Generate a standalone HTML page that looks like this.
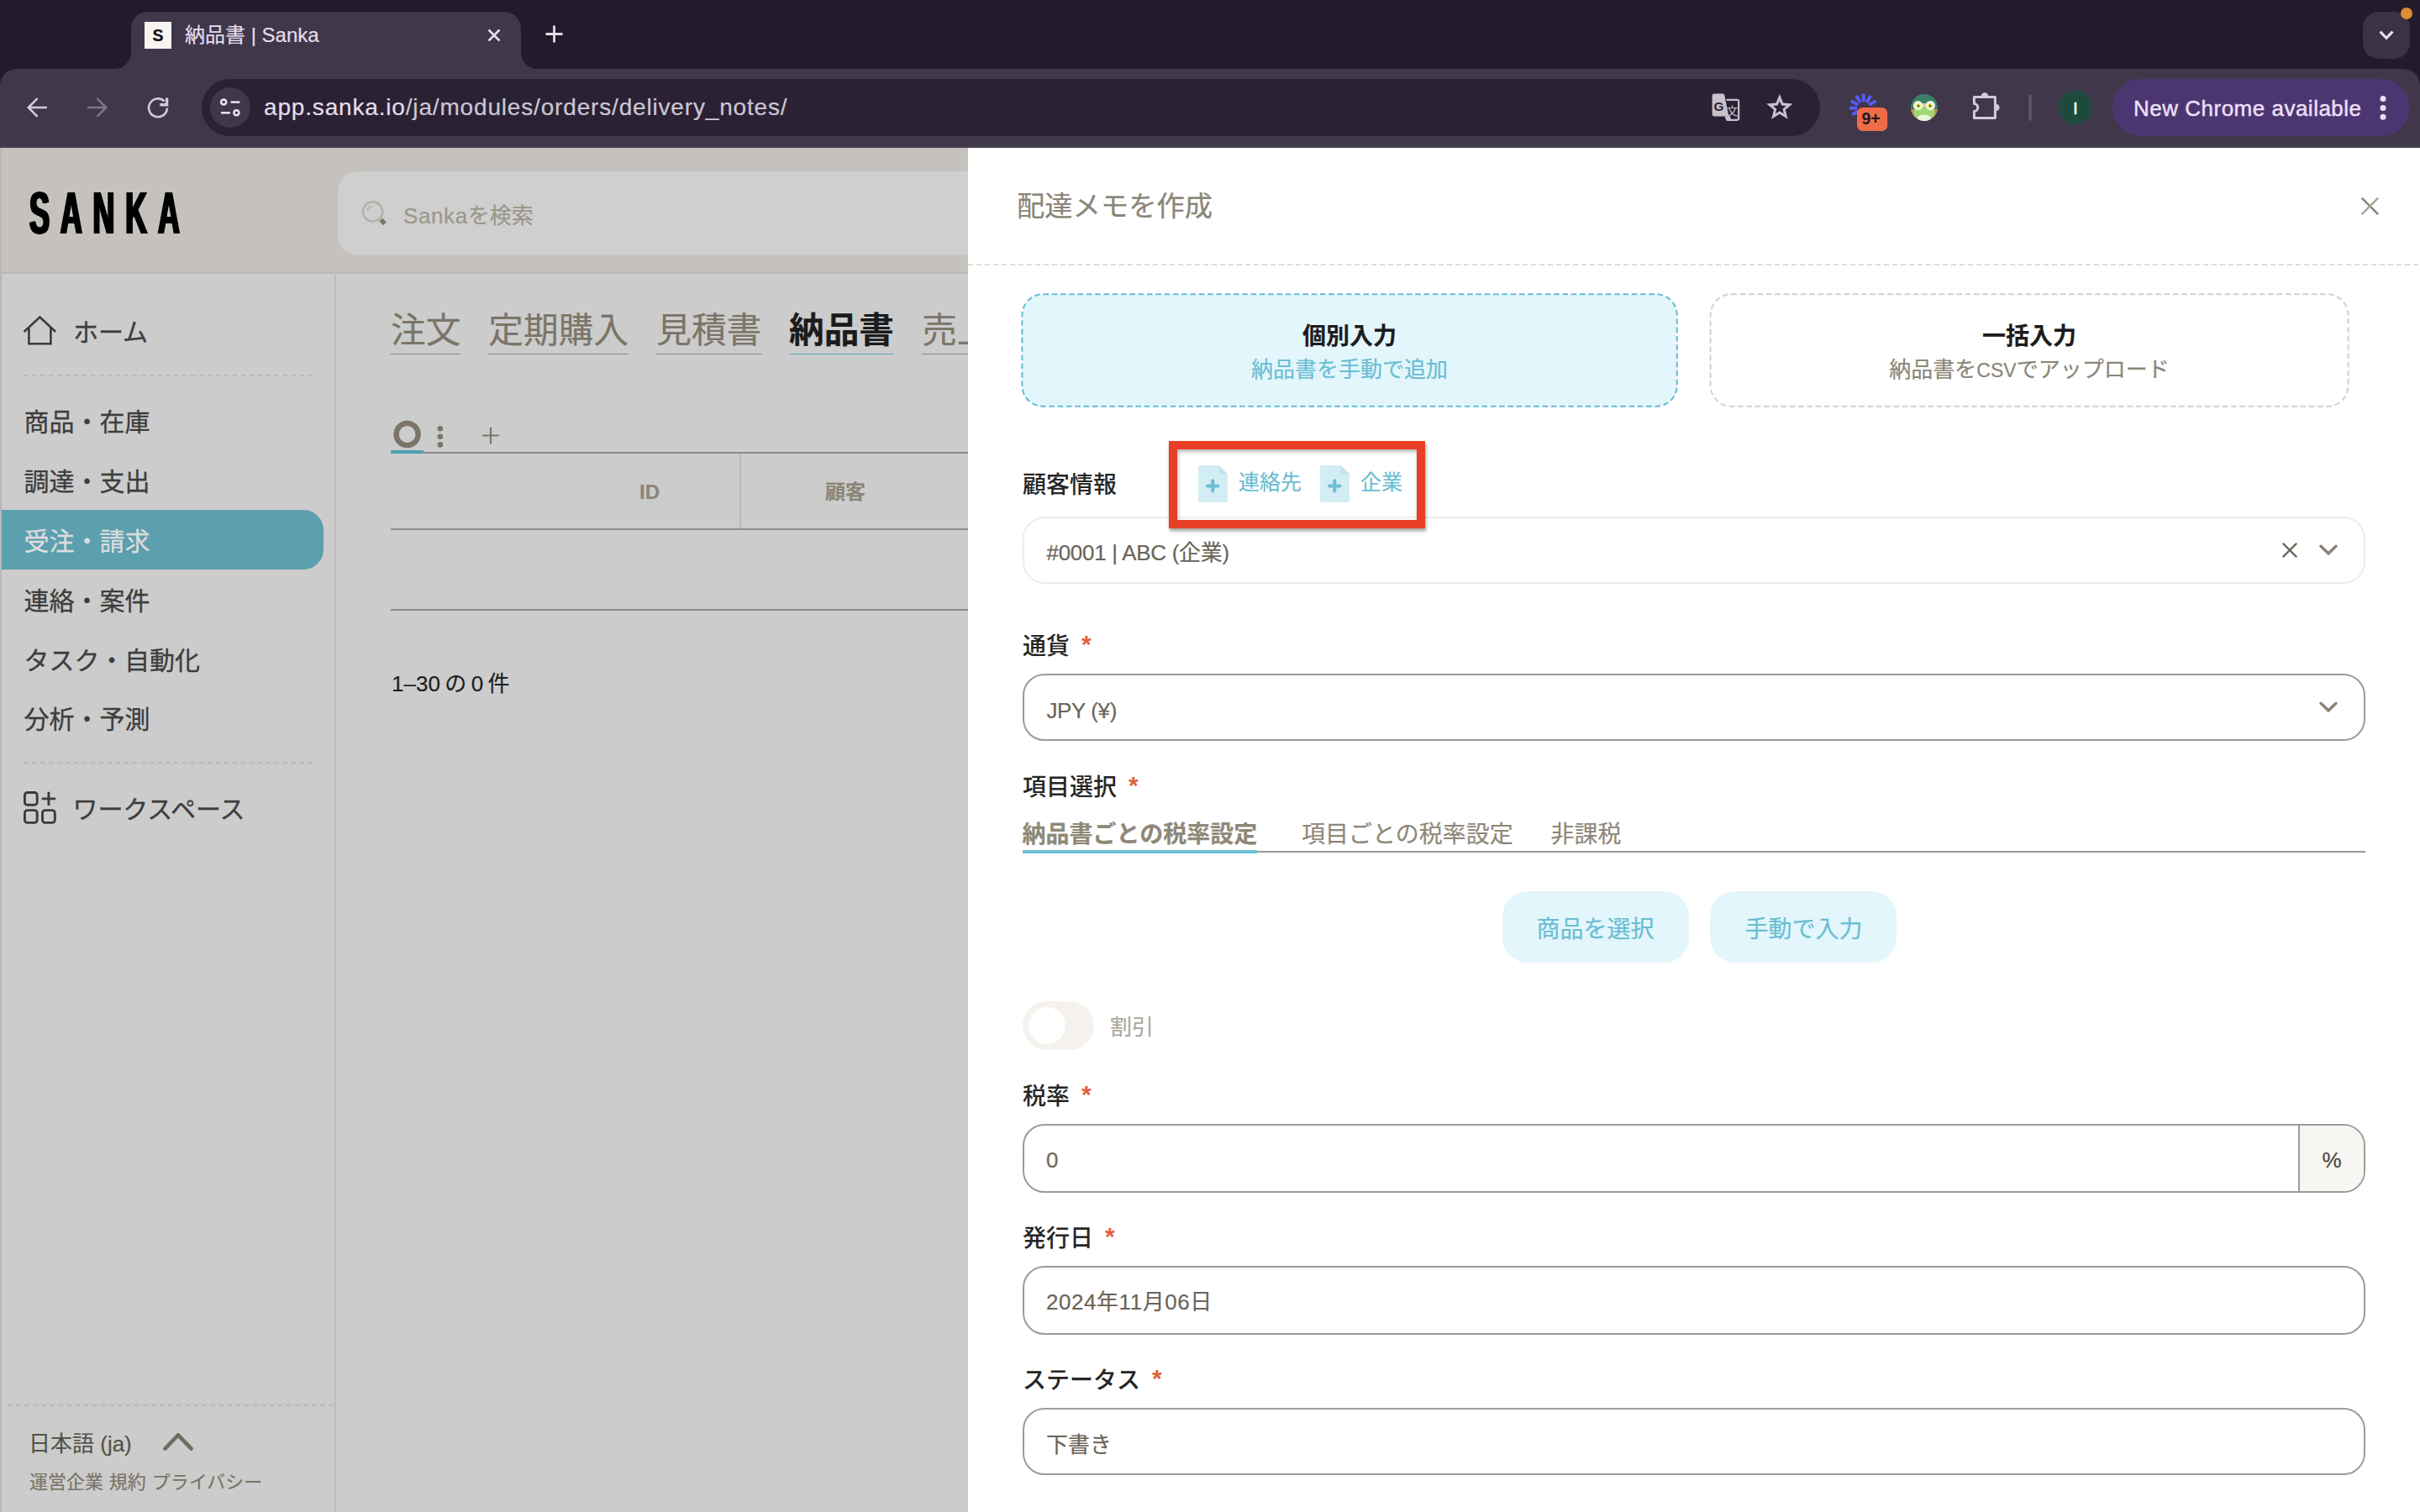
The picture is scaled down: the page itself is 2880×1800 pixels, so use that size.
<!DOCTYPE html>
<html lang="ja">
<head>
<meta charset="utf-8">
<title>納品書 | Sanka</title>
<style>
*{box-sizing:border-box;margin:0;padding:0}
html,body{width:2880px;height:1800px;overflow:hidden;background:#cccccc}
body{position:relative;font-family:"Liberation Sans","Noto Sans CJK JP",sans-serif;color:#2a2a2a}
.abs{position:absolute}
.t{position:absolute;white-space:nowrap;line-height:1;-webkit-text-stroke:0.2px}
svg{position:absolute;overflow:visible}
/* ---------- browser chrome ---------- */
#tabstrip{left:0;top:0;width:2880px;height:120px;background:#231b2b}
#toolbar{left:0;top:82px;width:2880px;height:94px;background:#40374a;border-radius:20px 20px 0 0}
#chromeline{left:0;top:174px;width:2880px;height:2px;background:linear-gradient(#4a4650 0 50%,#3e3a44 50% 100%)}
#tab{left:156px;top:14px;width:464px;height:70px;background:#40374a;border-radius:20px 20px 0 0}
.flare{width:20px;height:20px;top:62px;background:#40374a}
.flare i{position:absolute;left:0;top:0;width:20px;height:20px;background:#231b2b}
#omni{left:240px;top:94px;width:1926px;height:68px;border-radius:34px;background:#2a2234}
#siteinfo{left:250px;top:104px;width:48px;height:48px;border-radius:24px;background:#40374a}
.ctext{color:#e4deea}
/* ---------- app (dimmed) ---------- */
#apphead{left:0;top:176px;width:1152px;height:150px;background:#c5c2bd;border-bottom:2px solid #b9b8b5;border-top:1.5px solid #bfbfbe}
#leftedge{left:0;top:176px;width:2px;height:1624px;background:#b7b7b7}
#sideborder{left:398px;top:325px;width:2px;height:1475px;background:#bdbdbd}
#search{left:402px;top:204px;width:900px;height:100px;border-radius:24px;background:#cfcfcf}
.nav{font-size:30px;color:#3d3d3d;-webkit-text-stroke:0.3px}
.dash{height:0;border-top:2px dashed #b9b9b9}
#active{left:2px;top:607px;width:383px;height:71px;background:#5c9fae;border-radius:0 24px 24px 0}
.mtab{font-size:41.7px;color:#7b7568;height:55.6px;border-bottom:1.6px solid #8a877f}
/* ---------- drawer ---------- */
#drawer{left:1152px;top:176px;width:1728px;height:1624px;background:#fff}
.lbl{font-size:28px;color:#262626;font-weight:500;-webkit-text-stroke:0}
.req{color:#e0603f;font-weight:700;font-size:30px;line-height:0;position:relative;top:-1.8px;left:0px}
.inp{border:2px solid #9b9b9b;border-radius:26px;background:#fff}
.val{font-size:26px;color:#6b6459}
</style>
</head>
<body>
<!-- ======= BROWSER CHROME ======= -->
<div id="tabstrip" class="abs"></div>
<div id="toolbar" class="abs"></div>
<div id="tab" class="abs"></div>
<div class="abs flare" style="left:136px"><i style="border-radius:0 0 20px 0"></i></div>
<div class="abs flare" style="left:620px"><i style="border-radius:0 0 0 20px"></i></div>
<div id="chromeline" class="abs"></div>
<!-- favicon -->
<div class="abs" style="left:172px;top:26px;width:32px;height:32px;background:#f8f4f2"></div>
<div class="t" style="left:172px;top:26px;width:32px;height:32px;line-height:33px;text-align:center;font-size:19.5px;font-weight:700;color:#111">S</div>
<div class="t ctext" id="tabtitle" style="left:220px;top:27px;font-size:24px;line-height:30px">納品書 | Sanka</div>
<!-- tab close -->
<svg style="left:580px;top:34px" width="16" height="16" viewBox="0 0 16 16"><path d="M1.5 1.5L14.5 14.5M14.5 1.5L1.5 14.5" stroke="#e4deea" stroke-width="2.6" fill="none"/></svg>
<!-- new tab plus -->
<svg style="left:649px;top:30px" width="21" height="21" viewBox="0 0 21 21"><path d="M10.5 0.5V20.5M0.5 10.5H20.5" stroke="#e4deea" stroke-width="2.8" fill="none"/></svg>
<!-- tab search button -->
<div class="abs" style="left:2812px;top:14px;width:56px;height:56px;border-radius:19px;background:#3b3245"></div>
<svg style="left:2831px;top:36px" width="18" height="12" viewBox="0 0 18 12"><path d="M1.6 1.6L9 9.4L16.4 1.6" stroke="#e9e2ef" stroke-width="3" fill="none"/></svg>
<div class="abs" style="left:2857px;top:9px;width:14px;height:14px;border-radius:7px;background:#dc8e31"></div>
<!-- back -->
<svg style="left:32px;top:116px" width="24" height="24" viewBox="0 0 24 24"><path d="M24 12H3M12.6 1.2L1.8 12L12.6 22.8" stroke="#d3c8e0" stroke-width="2.6" fill="none" stroke-linejoin="miter"/></svg>
<!-- forward -->
<svg style="left:104px;top:116px" width="24" height="24" viewBox="0 0 24 24"><path d="M0 12H21M11.4 1.2L22.2 12L11.4 22.8" stroke="#7f7589" stroke-width="2.6" fill="none"/></svg>
<!-- reload -->
<svg style="left:175px;top:115px" width="26" height="26" viewBox="0 0 26 26"><path d="M23.9 13.6A10.9 10.9 0 1 1 20.6 5.5" stroke="#d3c8e0" stroke-width="2.6" fill="none"/><path d="M25.3 1.4V11.4H15.3V8H21.9V1.4Z" fill="#d3c8e0"/></svg>
<!-- omnibox -->
<div id="omni" class="abs"></div>
<div id="siteinfo" class="abs"></div>
<svg style="left:262px;top:116px" width="24" height="24" viewBox="0 0 24 24" fill="none" stroke="#ece4f2" stroke-width="2.5"><circle cx="4.2" cy="5.6" r="3"/><path d="M12.6 5.6H23.3"/><circle cx="19.4" cy="18.3" r="3"/><path d="M1 18.3H12"/></svg>
<div class="t ctext" id="url" style="left:314px;top:111px;font-size:28px;line-height:34px;letter-spacing:0.83px">app.sanka.io<span style="color:#cdc6d4">/ja/modules/orders/delivery_notes/</span></div>
<!-- translate icon -->
<svg style="left:2037px;top:111px" width="34" height="34" viewBox="0 0 34 34"><path d="M17.6 7.8H30a2.2 2.2 0 0 1 2.2 2.2V29.6a2.2 2.2 0 0 1-2.2 2.2H22.4L20.4 27" fill="none" stroke="#c6c1cb" stroke-width="2.2"/><path d="M3 .6H13.4Q15 .6 15.3 2.2L20.4 27.4H3Q.6 27.4 .6 25V3Q.6 .6 3 .6Z" fill="#c6c1cb"/><path d="M15.6 27.4H20.6L22.8 33H19.2Q17.4 33 17 31.4Z" fill="#c6c1cb"/><text x="8.6" y="20.6" font-family="Liberation Sans,sans-serif" font-size="15.5" font-weight="700" fill="#2a2234" text-anchor="middle">G</text><text x="24.6" y="26" font-family="Liberation Sans,Noto Sans CJK JP,sans-serif" font-size="14" fill="#c6c1cb" text-anchor="middle">文</text></svg>
<!-- star -->
<svg style="left:2102px;top:111px" width="32" height="32" viewBox="0 0 32 32"><path fill-rule="evenodd" fill="#c6c1cb" d="M15.90 1.00L20.16 11.61L31.56 12.38L22.79 19.71L25.58 30.79L15.90 24.72L6.22 30.79L9.01 19.71L0.24 12.38L11.64 11.61ZM15.90 9.17L18.14 14.38L23.79 14.91L19.53 18.65L20.78 24.18L15.90 21.29L11.02 24.18L12.27 18.65L8.01 14.91L13.66 14.38Z"/></svg>
<!-- extension 1: burst + badge -->
<svg style="left:2196px;top:108px" width="56" height="52" viewBox="0 0 56 52"><g stroke="#5a5af5" stroke-width="3.9" fill="none"><path d="M21.7 13.1L21.7 3.5"/><path d="M25.5 14.1L30.3 5.8"/><path d="M17.9 14.1L13.1 5.8"/><path d="M28.3 16.9L36.6 12.1"/><path d="M15.1 16.9L6.8 12.1"/><path d="M14.1 20.7L4.9 20.7"/><path d="M15.1 24.5L8.4 28.4"/></g><rect x="14" y="20" width="36.2" height="28" rx="6.5" fill="#ee6c47"/><text x="30.6" y="40.1" font-family="Liberation Sans,sans-serif" font-size="19.5" font-weight="700" fill="#1d1820" text-anchor="middle">9+</text></svg>
<!-- extension 2: frog -->
<svg style="left:2274px;top:112px" width="32" height="32" viewBox="0 0 32 32"><defs><clipPath id="fc"><circle cx="16" cy="16" r="16"/></clipPath></defs><g clip-path="url(#fc)"><rect width="32" height="32" fill="#3a8069"/><rect y="18" width="32" height="14" fill="#c98a5a"/><ellipse cx="16" cy="21.5" rx="12.4" ry="9.6" fill="#9ed872"/><ellipse cx="16" cy="28.5" rx="8" ry="4" fill="#e9f6d6"/><rect x="12.6" y="11" width="6.8" height="4" fill="#e8c6a4"/><circle cx="8.6" cy="13.6" r="5.6" fill="#f2f3ea"/><circle cx="23.4" cy="13.6" r="5.6" fill="#f2f3ea"/><circle cx="9" cy="14" r="2.7" fill="#d8e63a"/><circle cx="23" cy="14" r="2.7" fill="#d8e63a"/><circle cx="9" cy="14" r="1.2" fill="#3a4a20"/><circle cx="23" cy="14" r="1.2" fill="#3a4a20"/></g></svg>
<!-- puzzle -->
<svg style="left:2346px;top:108px" width="36" height="36" viewBox="0 0 36 36"><path d="M3.4 7.4H28.4V32.6H3.4V24.4A4.4 4.4 0 0 0 3.4 15.6Z" fill="none" stroke="#d5c9e3" stroke-width="3" stroke-linejoin="round"/><path d="M11.8 6.4A4.2 4.2 0 0 1 20.2 6.4Z" fill="#d5c9e3"/><path d="M29.4 15.8A4.2 4.2 0 0 1 29.4 24.2Z" fill="#d5c9e3"/></svg>
<!-- separator -->
<div class="abs" style="left:2414px;top:112px;width:4px;height:32px;border-radius:2px;background:#5c5269"></div>
<!-- avatar -->
<div class="abs" style="left:2450px;top:108px;width:40px;height:40px;border-radius:20px;background:#1c4b3d"></div>
<div class="t" style="left:2450px;top:108px;width:40px;height:40px;line-height:41px;text-align:center;font-size:21px;color:#fff;-webkit-text-stroke:0.4px #fff">I</div>
<!-- update pill -->
<div class="abs" style="left:2514px;top:94px;width:354px;height:68px;border-radius:34px;background:#4c3672"></div>
<div class="t" id="pilltxt" style="left:2539px;top:112px;font-size:26px;line-height:34px;letter-spacing:0.5px;color:#ecdff5;-webkit-text-stroke:0.5px #ecdff5">New Chrome available</div>
<svg style="left:2832px;top:113px" width="8" height="30" viewBox="0 0 8 30" fill="#ecdff5"><circle cx="4" cy="4.4" r="3.5"/><circle cx="4" cy="15.4" r="3.5"/><circle cx="4" cy="26.2" r="3.5"/></svg>
<!-- ======= APP ======= -->
<div id="apphead" class="abs"></div>
<div id="leftedge" class="abs"></div>
<div id="sideborder" class="abs"></div>
<!-- APPSTART -->
<div id="search" class="abs"></div>
<!-- logo -->
<div class="t" id="logo" style="left:34.6px;top:219.6px;font-size:69.5px;line-height:69.5px;font-weight:700;color:#000;letter-spacing:24.3px;transform:scaleX(0.52);transform-origin:0 0;text-shadow:-2.2px 0 0 #000,2.2px 0 0 #000,-1.1px 0 0 #000,1.1px 0 0 #000">SANKA</div>
<!-- search icon -->
<svg style="left:428px;top:236px" width="36" height="36" viewBox="0 0 36 36"><circle cx="15.6" cy="16" r="11.6" fill="none" stroke="#b5b2aa" stroke-width="2.6"/><path d="M9.4 14.4A6.4 6.4 0 0 1 14.4 9.6" fill="none" stroke="#b5b2aa" stroke-width="2"/><path d="M25.2 25.6L30 30.4" stroke="#7b7463" stroke-width="5.4" fill="none"/></svg>
<div class="t" id="ph" style="left:480px;top:239px;font-size:26px;line-height:36px;color:#9a968a"><span style="letter-spacing:0.6px">Sanka</span>を検索</div>
<!-- sidebar -->
<svg style="left:27px;top:375px" width="42" height="37" viewBox="0 0 42 37"><path d="M1.6 20L20.4 2.6L39.2 20" fill="none" stroke="#3b3b3b" stroke-width="2.6" stroke-linejoin="miter"/><path d="M7.4 15.6V34.2H33.4V15.6" fill="none" stroke="#3b3b3b" stroke-width="2.6"/></svg>
<div class="t nav" id="n0" style="left:87px;top:378px;line-height:36px">ホーム</div>
<div class="abs dash" style="left:28px;top:446px;width:344px"></div>
<div class="t nav" id="n1" style="left:28.5px;top:485px;line-height:36px">商品・在庫</div>
<div class="t nav" id="n2" style="left:28.5px;top:556px;line-height:36px">調達・支出</div>
<div id="active" class="abs"></div>
<div class="t nav" id="n3" style="left:28.5px;top:627px;line-height:36px;color:#dcdcdc">受注・請求</div>
<div class="t nav" id="n4" style="left:28.5px;top:698px;line-height:36px">連絡・案件</div>
<div class="t nav" id="n5" style="left:28.5px;top:769px;line-height:36px">タスク・自動化</div>
<div class="t nav" id="n6" style="left:28.5px;top:839px;line-height:36px">分析・予測</div>
<div class="abs dash" style="left:28px;top:907px;width:344px"></div>
<svg style="left:28px;top:941px" width="41" height="41" viewBox="0 0 40 40" fill="none" stroke="#3b3b3b" stroke-width="2.8"><rect x="1.4" y="2.4" width="14.4" height="14.4" rx="3"/><rect x="1.4" y="23" width="14.4" height="14.4" rx="3"/><rect x="22" y="23" width="14.4" height="14.4" rx="3"/><path d="M29.2 1.6V17.6M21.2 9.6H37.2"/></svg>
<div class="t nav" id="n7" style="left:86.5px;top:945.5px;line-height:36px;letter-spacing:-0.1px">ワークスペース</div>
<div class="abs dash" style="left:9px;top:1672px;width:388px"></div>
<div class="t" id="lang" style="left:34px;top:1701px;font-size:26px;line-height:36px;color:#55524b">日本語 (ja)</div>
<svg style="left:194px;top:1704px" width="36" height="24" viewBox="0 0 36 24"><path d="M2.4 20.6L18 4.4L33.6 20.6" fill="none" stroke="#6f6c60" stroke-width="4.6" stroke-linecap="round" stroke-linejoin="round"/></svg>
<div class="t" id="foot" style="left:35px;top:1750px;font-size:22px;line-height:30px;color:#7a7466;word-spacing:0.7px">運営企業 規約 プライバシー</div>
<!-- main tabs -->
<div class="t mtab" id="mt1" style="left:465px;top:366px;line-height:55px;width:83.4px">注文</div>
<div class="t mtab" id="mt2" style="left:581.3px;top:366px;line-height:55px">定期購入</div>
<div class="t mtab" id="mt3" style="left:781.3px;top:366px;line-height:55px">見積書</div>
<div class="t mtab" id="mt4" style="left:939px;top:366px;line-height:55px;color:#1c1c1c;font-weight:700;border-bottom-color:#5aa5b5">納品書</div>
<div class="t mtab" id="mt5" style="left:1097.2px;top:366px;line-height:55px">売上</div>
<!-- view row -->
<svg style="left:465px;top:498px" width="140" height="44" viewBox="0 0 140 44"><circle cx="19.6" cy="19" r="13.1" fill="none" stroke="#7b7568" stroke-width="6.4"/><g fill="#7b7568"><circle cx="58.9" cy="12.2" r="3.3"/><circle cx="58.9" cy="21.8" r="3.3"/><circle cx="58.9" cy="31.4" r="3.3"/></g><path d="M119 10.7V30.3M109.2 20.5H128.8" stroke="#7b7568" stroke-width="2.2" fill="none"/></svg>
<div class="abs" style="left:465px;top:537.5px;width:700px;height:2px;background:#8c8c8c"></div>
<div class="abs" style="left:465px;top:536px;width:39px;height:4px;background:#4f9fb0"></div>
<div class="abs" style="left:880.4px;top:540px;width:1.6px;height:90px;background:#bcbcbc"></div>
<div class="t" id="thid" style="left:713px;top:568px;width:120px;text-align:center;font-size:24px;line-height:36px;font-weight:700;color:#8a8679">ID</div>
<div class="t" id="thc" style="left:946px;top:568px;width:120px;text-align:center;font-size:24px;line-height:36px;font-weight:700;color:#8a8679">顧客</div>
<div class="abs" style="left:465px;top:629.2px;width:700px;height:2px;background:#8c8c8c"></div>
<div class="abs" style="left:465px;top:725px;width:700px;height:2px;background:#8c8c8c"></div>
<div class="t" id="cnt" style="left:466px;top:796px;font-size:26px;line-height:36px;color:#1e1e1e;word-spacing:-1.8px">1–30 の 0 件</div>
<!-- APPEND -->
<!-- ======= DRAWER ======= -->
<div id="drawer" class="abs"></div>
<!-- DRSTART -->
<div class="t" id="dtitle" style="left:1210px;top:224px;font-size:33.3px;line-height:44px;color:#8a8578">配達メモを作成</div>
<svg style="left:2810px;top:234.8px" width="21" height="21" viewBox="0 0 21 21"><path d="M1.4 1.4L19.4 19.4" stroke="#8a8578" stroke-width="2.6" stroke-linecap="round"/><path d="M19.4 1.4L1.4 19.4" stroke="#aaa698" stroke-width="2.6" stroke-linecap="round"/></svg>
<div class="abs" id="dline" style="left:1152px;top:314px;width:1728px;height:2px;background:repeating-linear-gradient(90deg,#e1dfd6 0 6px,transparent 6px 10px)"></div>
<!-- cards -->
<svg id="card1" style="left:1214px;top:348px" width="784" height="138" viewBox="0 0 784 138"><rect x="2.4" y="2.2" width="779.4" height="133.6" rx="25" fill="#e2f6fc" stroke="#62bdd4" stroke-width="2" stroke-dasharray="6.6 3.7"/></svg>
<svg id="card2" style="left:2033px;top:348px" width="764" height="138" viewBox="0 0 764 138"><rect x="2.6" y="2.2" width="759" height="133.6" rx="25" fill="#fff" stroke="#d6d1c4" stroke-width="2" stroke-dasharray="6.6 3.7"/></svg>
<div class="t" id="c1a" style="left:1215.5px;top:382.5px;width:781px;text-align:center;font-size:28px;line-height:36px;font-weight:700;color:#1c1c1c">個別入力</div>
<div class="t" id="c1b" style="left:1215.5px;top:421.7px;width:781px;text-align:center;font-size:26px;line-height:36px;color:#6bbdd3">納品書を手動で追加</div>
<div class="t" id="c2a" style="left:2034.5px;top:382.5px;width:761px;text-align:center;font-size:28px;line-height:36px;font-weight:700;color:#1c1c1c">一括入力</div>
<div class="t" id="c2b" style="left:2034.5px;top:421.7px;width:761px;text-align:center;font-size:26px;line-height:36px;color:#8a8578">納品書を<span style="font-size:23px">CSV</span>でアップロード</div>
<!-- customer -->
<div class="t lbl" id="l1" style="left:1217px;top:559.5px;line-height:36px">顧客情報</div>
<div class="abs" id="sel1" style="left:1217px;top:615px;width:1598px;height:79.5px;border-radius:26px;border:2px solid #efede7;background:#fff"></div>
<div class="t val" id="v1" style="left:1245.5px;top:640px;line-height:36px;letter-spacing:-0.3px">#0001 | ABC (企業)</div>
<svg style="left:2715px;top:645.4px" width="20" height="20" viewBox="0 0 20 20"><path d="M2.4 2.4L17.6 17.6M17.6 2.4L2.4 17.6" stroke="#6d685c" stroke-width="2.4" stroke-linecap="round" fill="none"/></svg>
<svg class="chev" style="left:2760px;top:648px" width="22" height="14" viewBox="0 0 22 14"><path d="M2 2.2L11 10.8L20 2.2" stroke="#8a8373" stroke-width="3.4" stroke-linecap="round" stroke-linejoin="miter" fill="none"/></svg>
<!-- red annotation -->
<div class="abs" id="redbox" style="left:1391px;top:525px;width:305px;height:104px;border:10px solid #e63f25;box-shadow:1px 3px 4px rgba(0,0,0,.38), inset 1px 3px 4px rgba(0,0,0,.28)"></div>
<svg class="doc" style="left:1425.6px;top:554px" width="35" height="44" viewBox="0 0 35 44"><path d="M2 0H24.5L35 10.5V42a2 2 0 0 1-2 2H2a2 2 0 0 1-2-2V2a2 2 0 0 1 2-2Z" fill="#d3edf4"/><path d="M24.5 0L35 10.5H26.5a2 2 0 0 1-2-2Z" fill="#c2e3ed"/><path d="M17.3 18.2V30.6M11.1 24.4H23.5" stroke="#6bbdd3" stroke-width="4" stroke-linecap="round"/></svg>
<div class="t" id="a1" style="left:1474px;top:556px;font-size:25px;line-height:36px;color:#6bbdd3">連絡先</div>
<svg class="doc" style="left:1571px;top:554px" width="35" height="44" viewBox="0 0 35 44"><path d="M2 0H24.5L35 10.5V42a2 2 0 0 1-2 2H2a2 2 0 0 1-2-2V2a2 2 0 0 1 2-2Z" fill="#d3edf4"/><path d="M24.5 0L35 10.5H26.5a2 2 0 0 1-2-2Z" fill="#c2e3ed"/><path d="M17.3 18.2V30.6M11.1 24.4H23.5" stroke="#6bbdd3" stroke-width="4" stroke-linecap="round"/></svg>
<div class="t" id="a2" style="left:1619px;top:556px;font-size:25px;line-height:36px;color:#6bbdd3">企業</div>
<!-- currency -->
<div class="t lbl" id="l2" style="left:1217px;top:752px;line-height:36px">通貨<span class="req" style="margin-left:14px">*</span></div>
<div class="abs inp" id="sel2" style="left:1217px;top:802px;width:1598px;height:80px"></div>
<div class="t val" id="v2" style="left:1245.5px;top:828px;line-height:36px;letter-spacing:-0.4px">JPY (¥)</div>
<svg class="chev" style="left:2760px;top:835px" width="22" height="14" viewBox="0 0 22 14"><path d="M2 2.2L11 10.8L20 2.2" stroke="#8a8373" stroke-width="3.4" stroke-linecap="round" fill="none"/></svg>
<!-- items -->
<div class="t lbl" id="l3" style="left:1217px;top:920px;line-height:36px">項目選択<span class="req" style="margin-left:14px">*</span></div>
<div class="t" id="tb1" style="left:1216.5px;top:976px;font-size:28px;line-height:36px;font-weight:700;color:#8e8878">納品書ごとの税率設定</div>
<div class="t" id="tb2" style="left:1549px;top:976px;font-size:28px;line-height:36px;color:#8e8878">項目ごとの税率設定</div>
<div class="t" id="tb3" style="left:1845.5px;top:976px;font-size:28px;line-height:36px;color:#8e8878">非課税</div>
<div class="abs" style="left:1217px;top:1013.4px;width:1598px;height:2px;background:#9a9a9a"></div>
<div class="abs" style="left:1217px;top:1012px;width:279px;height:4px;background:#6bc3d6"></div>
<div class="abs" id="b1" style="left:1787.5px;top:1060.5px;width:222px;height:85.5px;border-radius:30px;background:#e2f6fc"></div>
<div class="t" id="b1t" style="left:1787.5px;top:1089px;width:222px;text-align:center;font-size:28px;line-height:36px;color:#6bbdd3">商品を選択</div>
<div class="abs" id="b2" style="left:2035.4px;top:1060.5px;width:222px;height:85.5px;border-radius:30px;background:#e2f6fc"></div>
<div class="t" id="b2t" style="left:2035.4px;top:1089px;width:222px;text-align:center;font-size:28px;line-height:36px;color:#6bbdd3">手動で入力</div>
<!-- toggle -->
<div class="abs" style="left:1217px;top:1192px;width:85px;height:58px;border-radius:29px;background:#f5f1ed"></div>
<div class="abs" style="left:1224px;top:1199px;width:44px;height:44px;border-radius:22px;background:#fff"></div>
<div class="t" id="tg" style="left:1321px;top:1205px;font-size:26px;line-height:36px;color:#aaa79c">割引</div>
<!-- tax -->
<div class="t lbl" id="l4" style="left:1217px;top:1287.5px;line-height:36px">税率<span class="req" style="margin-left:14px">*</span></div>
<div class="abs inp" id="in1" style="left:1217px;top:1338px;width:1598px;height:82px;overflow:hidden"><div style="position:absolute;right:0;top:0;width:78px;height:100%;background:#f7f6f2;border-left:2px solid #9b9b9b"></div></div>
<div class="t val" id="v3" style="left:1245px;top:1362.5px;line-height:36px">0</div>
<div class="t" id="pct" style="left:2737px;top:1362.5px;width:76px;text-align:center;font-size:26px;line-height:36px;color:#4a473f">%</div>
<!-- issue date -->
<div class="t lbl" id="l5" style="left:1217px;top:1456.7px;line-height:36px">発行日<span class="req" style="margin-left:14px">*</span></div>
<div class="abs inp" id="in2" style="left:1217px;top:1507px;width:1598px;height:81.5px"></div>
<div class="t val" id="v4" style="left:1245px;top:1532px;line-height:36px;letter-spacing:0.55px">2024年11月06日</div>
<!-- status -->
<div class="t lbl" id="l6" style="left:1217px;top:1626px;line-height:36px">ステータス<span class="req" style="margin-left:14px">*</span></div>
<div class="abs inp" id="in3" style="left:1217px;top:1676px;width:1598px;height:80px"></div>
<div class="t val" id="v5" style="left:1245px;top:1702px;line-height:36px">下書き</div>
<!-- DREND -->
</body>
</html>
